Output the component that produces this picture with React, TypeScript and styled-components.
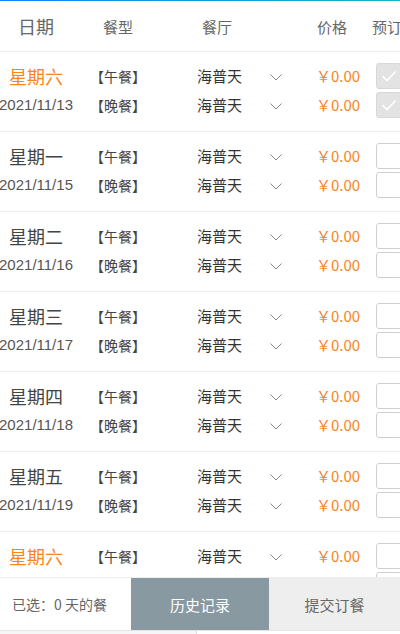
import React from "react";
import styled, { createGlobalStyle, css } from "styled-components";

const GlobalStyle = createGlobalStyle`
  html, body {
    margin: 0;
    padding: 0;
    background: #ffffff;
  }
  body {
    font-family: "Noto Sans CJK SC", "Liberation Sans", Arial, sans-serif;
  }
  * { box-sizing: border-box; }
`;

type Meal = { type: string; restaurant: string; price: string };
type Day = { week: string; date: string; weekend: boolean; booked: boolean };

const days: Day[] = [
  { week: "星期六", date: "2021/11/13", weekend: true, booked: true },
  { week: "星期一", date: "2021/11/15", weekend: false, booked: false },
  { week: "星期二", date: "2021/11/16", weekend: false, booked: false },
  { week: "星期三", date: "2021/11/17", weekend: false, booked: false },
  { week: "星期四", date: "2021/11/18", weekend: false, booked: false },
  { week: "星期五", date: "2021/11/19", weekend: false, booked: false },
  { week: "星期六", date: "2021/11/20", weekend: true, booked: false },
];

const meals: Meal[] = [
  { type: "【午餐】", restaurant: "海普天", price: "￥0.00" },
  { type: "【晚餐】", restaurant: "海普天", price: "￥0.00" },
];

export default function App() {
  return (
    <>
      <GlobalStyle />
      <Page>
        <TopLine />
        <Header>
          <DateHead>日期</DateHead>
          <TypeHead>餐型</TypeHead>
          <PlaceHead>餐厅</PlaceHead>
          <PriceHead>价格</PriceHead>
          <BookHead>预订</BookHead>
        </Header>
        <List>
          {days.map((day) => (
            <DayBlock key={day.date}>
              {meals.map((meal, i) => (
                <Line key={meal.type}>
                  <DateCell>
                    {i === 0 ? (
                      <WeekText $weekend={day.weekend}>{day.week}</WeekText>
                    ) : (
                      <DateText>{day.date}</DateText>
                    )}
                  </DateCell>
                  <TypeCell>{meal.type}</TypeCell>
                  <PlaceCell>{meal.restaurant}</PlaceCell>
                  <ArrowCell>
                    <svg width="12" height="7" viewBox="0 0 12 7">
                      <polyline points="0.5,0.5 6,6 11.5,0.5" fill="none" stroke="#888" strokeWidth="1" />
                    </svg>
                  </ArrowCell>
                  <PriceCell>{meal.price}</PriceCell>
                  <BookCell>
                    <CheckBox $checked={day.booked}>
                      {day.booked && (
                        <svg width="16" height="12" viewBox="0 0 16 12">
                          <polyline points="1.5,6 6,10.5 14.5,1.5" fill="none" stroke="#fff" strokeWidth="1.6" />
                        </svg>
                      )}
                    </CheckBox>
                  </BookCell>
                </Line>
              ))}
            </DayBlock>
          ))}
        </List>
        <Footer>
          <Selected>已选：0 天的餐</Selected>
          <FooterButton $variant="history">历史记录</FooterButton>
          <FooterButton $variant="submit">提交订餐</FooterButton>
        </Footer>
        <BottomStrip>
          <StripLeft />
          <StripRight />
        </BottomStrip>
      </Page>
    </>
  );
}

const Page = styled.div`
  width: 400px;
  height: 634px;
  display: flex;
  flex-direction: column;
  overflow: hidden;
  background: #fff;
`;

const TopLine = styled.div`
  height: 1px;
  flex-shrink: 0;
  background: linear-gradient(90deg, #0a84ff, #17b4bf);
`;

const Header = styled.div`
  height: 51px;
  flex-shrink: 0;
  display: flex;
  align-items: center;
  border-bottom: 1px solid #ececec;
  color: #666;
  font-size: 15px;
  white-space: nowrap;

  & > * {
    flex-shrink: 0;
  }
`;

const DateHead = styled.div`
  width: 72px;
  text-align: center;
  font-size: 18px;
`;

const TypeHead = styled.div`
  width: 92px;
  text-align: center;
`;

const PlaceHead = styled.div`
  width: 106px;
  text-align: center;
`;

const PriceHead = styled.div`
  width: 94px;
  padding-left: 47px;
`;

const BookHead = styled.div`
  padding-left: 8px;
`;

const List = styled.div`
  flex: 1;
  overflow: hidden;
`;

const DayBlock = styled.div`
  height: 80px;
  padding-top: 9px;
  border-bottom: 1px solid #ececec;
`;

const Line = styled.div`
  height: 29px;
  display: flex;
  align-items: center;
  white-space: nowrap;

  & > * {
    flex-shrink: 0;
  }
`;

const DateCell = styled.div`
  width: 72px;
  display: flex;
  justify-content: center;
`;

const WeekText = styled.span<{ $weekend: boolean }>`
  font-size: 18px;
  color: #444;
  ${({ $weekend }) =>
    $weekend &&
    css`
      color: #f7861f;
    `}
`;

const DateText = styled.span`
  font-size: 15px;
  color: #555;
  font-family: "Liberation Sans", "Noto Sans CJK SC", sans-serif;
`;

const TypeCell = styled.div`
  width: 92px;
  text-align: center;
  font-size: 14px;
  color: #444;
`;

const PlaceCell = styled.div`
  width: 106px;
  text-align: center;
  padding-left: 5px;
  font-size: 15px;
  color: #333;
`;

const ArrowCell = styled.div`
  width: 46px;
  height: 29px;
  display: flex;
  align-items: center;
  padding-top: 4px;
`;

const PriceCell = styled.div`
  width: 60px;
  font-size: 15px;
  color: #f7861f;
`;

const BookCell = styled.div`
  display: flex;
  align-items: center;
`;

const CheckBox = styled.div<{ $checked: boolean }>`
  width: 26px;
  height: 26px;
  border-radius: 3px;
  border: 1px solid #cfcfcf;
  background: #fff;
  display: flex;
  align-items: center;
  justify-content: center;
  ${({ $checked }) =>
    $checked &&
    css`
      background: #e3e3e3;
      border-color: #d8d8d8;
    `}
`;

const Footer = styled.div`
  height: 53px;
  flex-shrink: 0;
  display: flex;
  align-items: stretch;
  border-top: 1px solid #ececec;
  white-space: nowrap;
`;

const Selected = styled.div`
  width: 131px;
  display: flex;
  align-items: center;
  padding-left: 12px;
  font-size: 14px;
  color: #666;
`;

const FooterButton = styled.div<{ $variant: "history" | "submit" }>`
  display: flex;
  align-items: center;
  justify-content: center;
  font-size: 15px;
  ${({ $variant }) =>
    $variant === "history"
      ? css`
          width: 138px;
          background: #8899a1;
          color: #fff;
        `
      : css`
          flex: 1;
          background: #eeeeee;
          color: #666;
        `}
`;

const BottomStrip = styled.div`
  height: 4px;
  flex-shrink: 0;
  display: flex;
  border-top: 1px solid #e6e6e6;
`;

const StripLeft = styled.div`
  width: 197px;
  background: #f6f6f6;
  border-right: 1px solid #dcdcdc;
`;

const StripRight = styled.div`
  flex: 1;
  background: #fff;
`;
